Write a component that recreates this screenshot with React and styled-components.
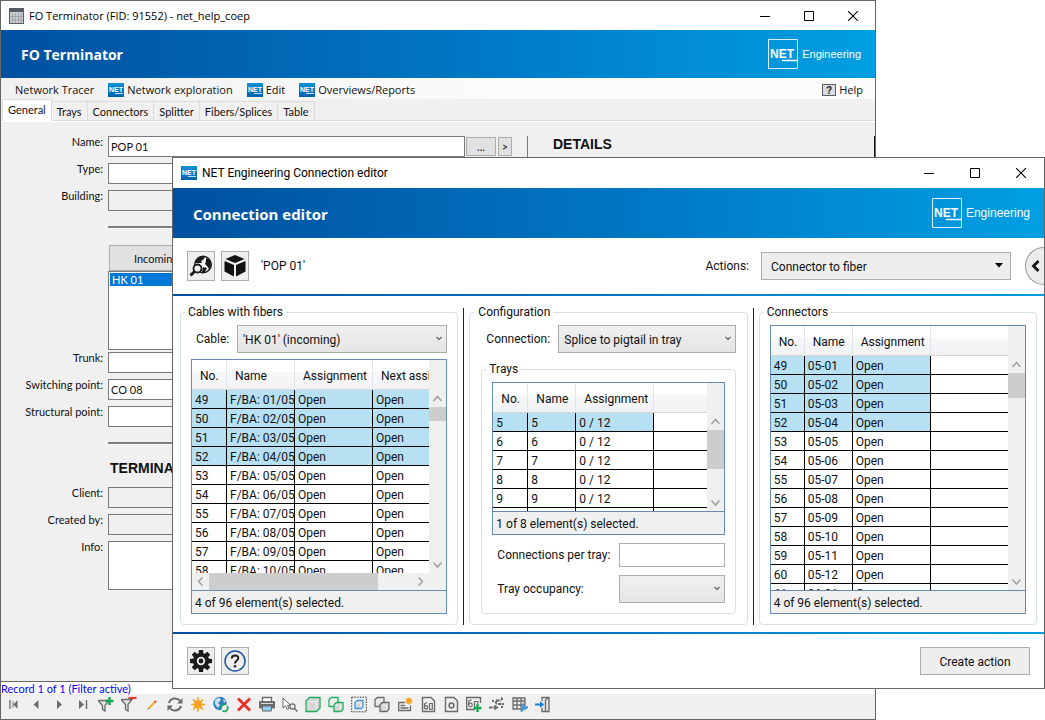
import React from 'react';
import styled, { createGlobalStyle, css } from 'styled-components';

const brand = 'linear-gradient(90deg, #0050a0 0%, #0075c2 50%, #009fe3 100%)';
const ui = 'Roboto, "Open Sans", sans-serif';
const compact = 'Lato, Roboto, sans-serif';
const heading = '"Open Sans", "Noto Sans", sans-serif';
const classic = '"Liberation Sans", Arial, sans-serif';

const GlobalStyle = createGlobalStyle`
  *, *::before, *::after { box-sizing: border-box; }
  html, body { margin: 0; background: #fff; }
  body { font: 12px/16px ${ui}; color: #111; }
  button, input, select, textarea { font: inherit; color: inherit; margin: 0; border-radius: 0; }
  svg { display: block; flex: none; }
`;

/* ---------- window frame ---------- */

const Desktop = styled.div`
  position: relative;
  display: flex;
  height: 100vh;
  min-height: 640px;
  overflow: hidden;
`;

const Window = styled.section`
  display: flex;
  flex-direction: column;
  min-width: 0;
  border: 1px solid #666;
  background: ${(p) => (p.$face ? '#f0f0f0' : '#fff')};
`;

const MainWindow = styled(Window)`
  flex: 1;
  margin-right: 169px;
  font-family: ${heading};
  font-size: 11px;
`;

const DialogWindow = styled(Window)`
  position: absolute;
  inset: 157px 0 31px 172px;
`;

const TitleBar = styled.header`
  display: flex;
  align-items: center;
  gap: 5px;
  height: ${(p) => p.$height}px;
  flex: none;
  padding-left: 8px;
  background: #fff;
  color: #000;
`;

const TitleText = styled.span`
  flex: 1;
`;

const WindowButtons = styled.div`
  display: flex;
  height: 100%;
`;

const WindowButton = styled.button`
  display: grid;
  place-items: center;
  width: ${(p) => p.$width}px;
  padding: 0;
  border: 0;
  background: none;
`;

const Banner = styled.div`
  display: flex;
  align-items: center;
  justify-content: space-between;
  flex: none;
  height: ${(p) => p.$height}px;
  padding: 0 14px 0 20px;
  background: ${brand};
  color: #fff;
`;

const BannerTitle = styled.h1`
  margin: 0;
  padding-top: 2px;
  font-family: ${heading};
  font-size: ${(p) => p.$size}px;
  line-height: 20px;
  font-weight: 700;
`;

const Brand = styled.div`
  display: flex;
  align-items: center;
  gap: 4px;
  font: ${(p) => p.$size}px/16px ${classic};
`;

function Controls({ width }) {
  return (
    <WindowButtons>
      <WindowButton $width={width} aria-label="Minimize">
        <svg width="10" height="10"><path d="M0 5.5H10" stroke="#000" /></svg>
      </WindowButton>
      <WindowButton $width={width} aria-label="Maximize">
        <svg width="10" height="10"><path d="M.5 .5H9.500V9.500H.5Z" fill="none" stroke="#000" /></svg>
      </WindowButton>
      <WindowButton $width={width} aria-label="Close">
        <svg width="10" height="10"><path d="M0 0L10 10M10 0L0 10" stroke="#000" strokeWidth="1.1" /></svg>
      </WindowButton>
    </WindowButtons>
  );
}

function BrandLogo({ size }) {
  return (
    <Brand $size={size}>
      <svg width="30" height="30" viewBox="0 0 30 30">
        <path d="M.5 .5H29.500V29.500H.5Z" fill="none" stroke="#fff" strokeOpacity=".85" />
        <text x="2" y="19" fontFamily="Liberation Sans" fontWeight="700" fontSize="12" fill="#fff">NET</text>
        <path d="M14 21.500H29" stroke="#fff" strokeWidth="1.500" />
      </svg>
      <span>Engineering</span>
    </Brand>
  );
}

function NetIcon() {
  return (
    <svg width="16" height="14" viewBox="0 0 16 14">
      <defs>
        <linearGradient id="net" x1="0" y1="0" x2="0" y2="1">
          <stop offset="0" stopColor="#0a93d8" />
          <stop offset="1" stopColor="#0062b0" />
        </linearGradient>
      </defs>
      <rect width="16" height="14" fill="url(#net)" />
      <text x="1" y="9" fontFamily="Liberation Sans" fontWeight="700" fontSize="7" fill="#fff">NET</text>
      <path d="M7 10.500H15" stroke="#bfe0f5" strokeWidth="1" />
    </svg>
  );
}

/* ---------- main window: menu and tabs ---------- */

const MenuBar = styled.nav`
  display: flex;
  align-items: center;
  gap: 14px;
  height: 21px;
  flex: none;
  padding: 2px 12px 0 14px;
  background: linear-gradient(90deg, #f0f0f0, #fcfcfc 60%);
`;

const MenuItem = styled.button`
  display: flex;
  align-items: center;
  gap: 3px;
  padding: 0;
  border: 0;
  background: none;
  ${(p) => p.$end && css`margin-left: auto;`}
`;

const Tabs = styled.div`
  display: flex;
  align-items: flex-end;
  flex: none;
  height: 22px;
  padding-left: 1px;
  border-bottom: 1px solid #dcdcdc;
  box-shadow: 0 1px #fff;
  font-family: ${compact};
`;

const Tab = styled.button`
  height: ${(p) => (p.$active ? 22 : 19)}px;
  margin-bottom: ${(p) => (p.$active ? -1 : 0)}px;
  padding: 1px 5px ${(p) => (p.$active ? 3 : 0)}px;
  border: 1px solid #dcdcdc;
  border-width: 1px 1px 0 ${(p) => (p.$active ? 1 : 0)}px;
  background: ${(p) => (p.$active ? '#fff' : '#f0f0f0')};
`;

/* ---------- main window: form ---------- */

const FormArea = styled.main`
  display: flex;
  flex: 1;
  min-height: 0;
  padding-top: 15px;
  border-bottom: 1px solid #666;
  font-family: ${compact};
  line-height: 13px;
  overflow: hidden;
`;

const Form = styled.form`
  display: grid;
  grid-template-columns: 102px 357px;
  align-content: start;
  column-gap: 5px;
  row-gap: 6px;
`;

const FieldLabel = styled.label`
  line-height: 11px;
  text-align: right;
`;

const fieldStyle = css`
  display: block;
  width: 100%;
  border: 1px solid #7a7a7a;
  background: ${(p) => (p.readOnly ? '#f0f0f0' : '#fff')};
  padding: 0 2px;
  outline: 0;
`;

const Field = styled.input`
  ${fieldStyle}
  height: 21px;
`;

const Area = styled.textarea`
  ${fieldStyle}
  height: 49px;
  resize: none;
`;

const FormRule = styled.hr`
  grid-column: 2;
  width: 100%;
  height: 3px;
  margin: 9px 0;
  border: 0;
  border-top: 2px solid #808080;
  border-bottom: 1px solid #fff;
`;

const CableBox = styled.div`
  grid-column: 2;
  margin-bottom: -4px;
  padding-top: 1px;
`;

const CableTab = styled.button`
  width: 94px;
  height: 26px;
  margin-left: 1px;
  padding: 0;
  border: 1px solid #adadad;
  background: #e1e1e1;
`;

const CableList = styled.ul`
  height: 79px;
  margin: 0;
  padding: 1px;
  border: 1px solid #7a7a7a;
  background: #fff;
  list-style: none;
`;

const CableItem = styled.li`
  padding-left: 2px;
  background: #0078d7;
  color: #fff;
`;

const SectionTitle = styled.h2`
  grid-column: 2;
  margin: 0 0 5px;
  padding-left: 2px;
  font: 700 14px/16px ${classic};
`;

const SideButtons = styled.div`
  display: flex;
  gap: 2px;
  height: 19px;
  margin: 1px 15px 0 1px;
`;

const SideButton = styled.button`
  width: ${(p) => p.$width}px;
  padding: 0;
  border: 1px solid #adadad;
  background: #e1e1e1;
`;

const Details = styled.aside`
  flex: 1;
  padding-left: 23px;
  border-left: 1px solid #7a7a7a;
  border-right: 1px solid #111;
`;

function TextRow({ id, label, ...rest }) {
  return (
    <>
      <FieldLabel htmlFor={id}>{label}</FieldLabel>
      <Field id={id} {...rest} />
    </>
  );
}

/* ---------- main window: status and record toolbar ---------- */

const RecordStatus = styled.div`
  flex: none;
  height: 12px;
  background: #fff;
  color: #00f;
  font-family: ${compact};
  line-height: 14px;
`;

const RecordBar = styled.div`
  display: flex;
  align-items: center;
  flex: none;
  gap: 5px;
  height: 25px;
  padding: 0 4px 4px;
`;

const RecordButton = styled.button`
  display: grid;
  place-items: center;
  width: 18px;
  height: 18px;
  padding: 0;
  border: 0;
  background: none;
`;

const g = '#6b6b6b';
const cube = (x, y, s, stroke, fill = '#d6d6d6') => (
  <g transform={`translate(${x} ${y})`}>
    <path d={`M0 ${s * 0.25}L${s * 0.25} 0H${s}V${s * 0.75}L${s * 0.75} ${s}H0Z`} fill={fill} stroke={stroke} strokeWidth="1.300" strokeLinejoin="round" />
    <path d={`M${s * 0.2} ${s * 0.3}H${s * 0.72}V${s * 0.85}M${s * 0.72} ${s * 0.3}L${s * 0.9} ${s * 0.12}`} fill="none" stroke="#f2f2f2" strokeWidth="1" />
  </g>
);
const page = <path d="M2.500 1.500H11L14.500 5V15.500H2.500Z" fill="none" stroke={g} strokeWidth="1.400" />;

const recordIcons = [
  ['First record', <><path d="M4 4V13" stroke={g} strokeWidth="1.300" /><path d="M11.500 4V13L7.500 8.500Z" fill={g} /><path d="M7 5.500V11.500" stroke={g} strokeWidth="1" /></>],
  ['Previous record', <path d="M9.500 4V13L4.500 8.500Z" fill={g} />],
  ['Next record', <path d="M5 4V13L10 8.500Z" fill={g} />],
  ['Last record', <><path d="M4 4V13L9 8.500Z" fill={g} /><path d="M11.500 4V13" stroke={g} strokeWidth="1.400" /></>],
  ['Add filter', <><path d="M0 4.500H11L7 9.500V15L4.500 13.500V9.500Z" fill="#e4e4e4" stroke={g} strokeWidth="1.300" /><path d="M11.500 1V9M7.500 5H15.500" stroke="#14a850" strokeWidth="2.400" /></>],
  ['Remove filter', <><path d="M0 3.500H11L7 8.500V15L4.500 13.500V8.500Z" fill="#e4e4e4" stroke={g} strokeWidth="1.300" /><path d="M7.500 2H15.500" stroke="#e8342e" strokeWidth="2.200" /></>],
  ['Edit', <><path d="M4.500 12.500L10.500 6.500" stroke="#f6b73c" strokeWidth="2.400" /><path d="M10.500 6.500L12 5" stroke="#e0564a" strokeWidth="2.400" /><path d="M3.500 13.500L5 12" stroke={g} /></>],
  ['Refresh', <><path d="M2 7A6.200 6.200 0 0 1 13 5M14 10A6.200 6.200 0 0 1 3 12" fill="none" stroke={g} strokeWidth="2" /><path d="M15.500 2V7.500H10ZM.5 15V9.500H6Z" fill={g} /></>],
  ['New', <><path d="M8 1.500V15.500M1 8.500H15M3 3.500L13 13.500M13 3.500L3 13.500" stroke="#f9a11b" strokeWidth="1.700" /><circle cx="8" cy="8.500" r="4" fill="#f9a11b" /></>],
  ['Update map', <><circle cx="7" cy="7.500" r="6.700" fill="#2f7fc0" /><path d="M2 4L6 1.500L8 4L5 7L7 9L5 12L2 8ZM10 3L13 5L11 7Z" fill="#cfe4f2" /><circle cx="11.500" cy="12" r="3.300" fill="#f0f0f0" stroke="#1fae5b" strokeWidth="1.700" strokeDasharray="7 2" /></>],
  ['Delete', <path d="M2 2.500L14 14.500M14 2.500L2 14.500" stroke="#e8342e" strokeWidth="3" />],
  ['Print', <><path d="M3.500 5V1.500H12.500V5" fill="#fff" stroke={g} strokeWidth="1.300" /><rect x="0" y="5" width="16" height="7.500" rx="1" fill={g} /><path d="M2 7.500H14" stroke="#ddd" /><path d="M3.500 10H12.500V15H3.500Z" fill="#8ccdf5" stroke={g} /></>],
  ['Find selection', <><path d="M1 2V12L3.500 9.800L5.500 13.500L7 12.500L5.500 9.200H8.500Z" fill="#fff" stroke={g} /><circle cx="10.500" cy="10.500" r="2.600" fill="#eee" stroke={g} strokeWidth="1.200" /><path d="M12.500 12.500L15.500 15.500" stroke={g} strokeWidth="1.500" /></>],
  ['Object', cube(1, 1.500, 14, '#22ad5e')],
  ['Objects', <>{cube(1, 1.500, 9, '#22ad5e', '#f0f0f0')}{cube(6, 6.500, 9, '#22ad5e')}</>],
  ['Select object', <><rect x=".7" y="1.200" width="14.600" height="14.600" fill="none" stroke="#333" strokeDasharray="1.500 1.200" />{cube(4, 4.500, 8, '#3d9be0')}</>],
  ['Copy object', <>{cube(1, 1.500, 9, g, '#e6e6e6')}{cube(6, 6.500, 9, g)}</>],
  ['New entry', <><path d="M8 6.500H1.700V14.500H13.500V9.500" fill="#eee" stroke={g} strokeWidth="1.300" /><path d="M3.500 9.500H8M3.500 12H11.500" stroke={g} strokeWidth="1.300" /><path d="M12 1.500V8.500M8.500 5H15.500M9.500 2.500L14.500 7.500M14.500 2.500L9.500 7.500" stroke="#f9a11b" strokeWidth="1.600" /></>],
  ['Report', <>{page}<circle cx="6" cy="11.300" r="1.700" fill="none" stroke={g} strokeWidth="1.300" /><path d="M4.500 11V8L7 6.500M9.500 13.500V7.500H12.300V13.500Z" fill="none" stroke={g} strokeWidth="1.200" /></>],
  ['Page', <>{page}<circle cx="8.500" cy="9.500" r="2.400" fill="none" stroke={g} strokeWidth="1.500" /></>],
  ['Add report', <><path d="M14.500 7V1.500H.7V13.500H9" fill="none" stroke={g} strokeWidth="1.400" /><circle cx="4.500" cy="9" r="1.800" fill="none" stroke={g} strokeWidth="1.200" /><path d="M2.800 9V5L5.500 3.500M8.500 11.500V5.500H11.800V8" fill="none" stroke={g} strokeWidth="1.200" /><path d="M11.500 8V16M7.500 12H15.500" stroke="#14a850" strokeWidth="2.300" /></>],
  ['Trace', <><path d="M0 11.500H7M7 4.500H12M9 8H15" stroke={g} strokeWidth="1.800" strokeDasharray="3.500 .8" /><path d="M5.500 8.500L9.500 11.500L5.500 14.500ZM3 4H5V6H3ZM12 1L14 2V4H12ZM12 10H14V12H12ZM8 3L5.500 6.500L8 9Z" fill={g} /></>],
  ['Table settings', <><path d="M1 2H13V13H1ZM1 5H13M1 9H13M5 2V13M9 2V13" fill="#eee" stroke={g} strokeWidth="1.300" /><path d="M9 15.500L13 10.500" stroke="#3d9be0" strokeWidth="2.300" /><path d="M12 7.500A2.600 2.600 0 1 0 15.500 10" fill="none" stroke="#3d9be0" strokeWidth="1.700" /></>],
  ['Close form', <><path d="M7 5V1.500H14V15.500H7V12M10.500 4L14 1.500M10.500 4V15.500" fill="#e4e4e4" stroke={g} strokeWidth="1.300" /><path d="M0 8.500H7" stroke="#1685d8" strokeWidth="2" /><path d="M5 5L9 8.500L5 12Z" fill="#1685d8" /></>],
];

/* ---------- dialog ---------- */

const DialogTools = styled.div`
  display: flex;
  align-items: center;
  flex: none;
  gap: 6px;
  height: 56px;
  padding-left: 14px;
`;

const IconButton = styled.button`
  display: grid;
  place-items: center;
  width: 28px;
  height: ${(p) => p.$height}px;
  padding: 0;
  border: 1px solid #adadad;
  background: #eee;
`;

const ObjectName = styled.span`
  flex: 1;
  padding-left: 6px;
`;

const ActionsLabel = styled.label`
  margin-right: 6px;
`;

const Drawer = styled.button`
  display: grid;
  place-items: center;
  width: 19px;
  height: 38px;
  margin-left: 8px;
  padding: 0;
  border: 1px solid #999;
  border-right: 0;
  border-radius: 19px 0 0 19px;
  background: #ececec;
`;

const BrandRule = styled.div`
  height: 2px;
  flex: none;
  background: ${brand};
`;

const SelectBox = styled.div`
  position: relative;
  display: flex;
  flex: ${(p) => (p.$width ? `0 1 ${p.$width}px` : 1)};
  height: 28px;
  min-width: 0;

  svg {
    position: absolute;
    right: ${(p) => (p.$solid ? 8 : 4)}px;
    top: ${(p) => (p.$solid ? 11 : 10)}px;
    pointer-events: none;
  }
`;

const NativeSelect = styled.select`
  appearance: none;
  width: 100%;
  padding: 1px ${(p) => (p.$solid ? 9 : 5)}px 0;
  border: 1px solid #acacac;
  background: ${(p) => (p.$solid ? '#eee' : 'linear-gradient(#f0f0f0, #e5e5e5)')};
`;

function Select({ id, value, width, solid }) {
  return (
    <SelectBox $width={width} $solid={solid}>
      <NativeSelect id={id} $solid={solid} defaultValue={value}>
        <option>{value}</option>
      </NativeSelect>
      {solid ? (
        <svg width="8" height="5"><path d="M0 0H8L4 4.500Z" fill="#000" /></svg>
      ) : (
        <svg width="8" height="7"><path d="M1.500 2L4 4.500L6.500 2" fill="none" stroke="#606060" strokeWidth="1.200" /></svg>
      )}
    </SelectBox>
  );
}

const Columns = styled.main`
  display: grid;
  grid-template-columns: minmax(0, 1fr) 1px minmax(0, 1fr) 1px minmax(0, 1fr);
  grid-template-rows: minmax(0, 1fr);
  column-gap: 5px;
  flex: 1;
  min-height: 0;
  padding: 8px 7px 7px;
`;

const Divider = styled.div`
  margin-top: 4px;
  background: #222;
`;

const Group = styled.fieldset`
  display: flex;
  flex-direction: column;
  gap: ${(p) => p.$gap || 6}px;
  min-width: 0;
  min-height: 0;
  margin: 0;
  padding: 5px ${(p) => p.$side || 10}px 10px;
  border: 1px solid #d5dfe5;
  border-radius: 4px;
  ${(p) => p.$inner && css`flex: 1;`}
`;

const Legend = styled.legend`
  margin-left: -6px;
  padding: 0 3px;
`;

const ControlRow = styled.div`
  display: grid;
  grid-template-columns: ${(p) => p.$label}px minmax(0, 1fr);
  align-items: center;
  flex: none;

  label {
    padding: 0 0 0 5px;
    white-space: nowrap;
  }
`;

const PlainInput = styled.input`
  width: 100%;
  height: 24px;
  padding: 0 4px;
  border: 1px solid #ababab;
  background: #fff;
`;

const GridFrame = styled.div`
  display: flex;
  flex-direction: column;
  flex: 1;
  min-height: 0;
  border: 1px solid #688caf;
`;

const GridBody = styled.div`
  display: flex;
  flex: 1;
  min-height: 0;
`;

const GridMain = styled.div`
  display: flex;
  flex-direction: column;
  flex: 1;
  min-width: 0;
`;

const GridViewport = styled.div`
  flex: 1;
  min-height: 0;
  overflow: hidden;
`;

const GridTable = styled.table`
  width: ${(p) => (p.$width ? `${p.$width}px` : '100%')};
  table-layout: fixed;
  border-collapse: separate;
  border-spacing: 0;
`;

const HeadCell = styled.th`
  height: 30px;
  padding: 3px 0 0 8px;
  border-right: 1px solid #e3e5e8;
  border-bottom: 1px solid #d5d5d5;
  background: linear-gradient(#fff 0 42%, #f7f8fa 42%, #f1f2f4);
  font-weight: 400;
  text-align: left;
  white-space: nowrap;
  &:last-child { border-right: 0; }
`;

const Cell = styled.td`
  height: 19px;
  padding: 2px 0 0 3px;
  border-right: 1px solid #000;
  border-bottom: 1px solid #000;
  background: ${(p) => (p.$selected ? '#b8e0f3' : '#fff')};
  line-height: 16px;
  white-space: nowrap;
  &:last-child { border-right: 0; }
`;

const GridStatus = styled.div`
  flex: none;
  height: 23px;
  padding: 4px 3px 0;
  border-top: 1px solid #688caf;
  background: #f0f0f0;
`;

const VScroll = styled.div`
  display: flex;
  flex-direction: column;
  align-items: center;
  flex: none;
  width: 17px;
  padding: 30px 0 ${(p) => (p.$corner ? 17 : 0)}px;
  background: #f0f0f0;
`;

const HScroll = styled.div`
  display: flex;
  align-items: center;
  flex: none;
  height: 17px;
  background: #f0f0f0;
`;

const VThumb = styled.div`
  width: 17px;
  height: ${(p) => p.$size}px;
  margin-bottom: auto;
  background: #cdcdcd;
`;

const HThumb = styled.div`
  width: 71%;
  height: 17px;
  margin-right: auto;
  background: #cdcdcd;
`;

const arrowPaths = {
  up: 'M4.500 11L8.500 6.500L12.500 11',
  down: 'M4.500 6.500L8.500 11L12.500 6.500',
  left: 'M10.500 4.500L6.500 8.500L10.500 12.500',
  right: 'M6.500 4.500L10.500 8.500L6.500 12.500',
};

function Arrow({ dir }) {
  return (
    <svg width="17" height="17">
      <path d={arrowPaths[dir]} fill="none" stroke="#a0a0a0" strokeWidth="1.500" />
    </svg>
  );
}

function DataGrid({ columns, rows, selected, status, thumb, tableWidth, horizontal }) {
  return (
    <GridFrame>
      <GridBody>
        <GridMain>
          <GridViewport>
            <GridTable $width={tableWidth}>
              <colgroup>
                {columns.map(([label, width]) => <col key={label} width={width} />)}
              </colgroup>
              <thead>
                <tr>{columns.map(([label]) => <HeadCell key={label} scope="col">{label}</HeadCell>)}</tr>
              </thead>
              <tbody>
                {rows.map((row, r) => (
                  <tr key={r}>
                    {columns.map(([label], c) => (
                      <Cell key={label} $selected={r < selected && label !== ''}>{row[c]}</Cell>
                    ))}
                  </tr>
                ))}
              </tbody>
            </GridTable>
          </GridViewport>
          {horizontal && <HScroll><Arrow dir="left" /><HThumb /><Arrow dir="right" /></HScroll>}
        </GridMain>
        <VScroll $corner={horizontal}>
          <Arrow dir="up" /><VThumb $size={thumb} /><Arrow dir="down" />
        </VScroll>
      </GridBody>
      <GridStatus>{status}</GridStatus>
    </GridFrame>
  );
}

const DialogFooter = styled.footer`
  display: flex;
  flex: none;
  gap: 6px;
  height: 54px;
  padding: 13px 14px;
`;

const PushButton = styled.button`
  width: 110px;
  height: 28px;
  margin-left: auto;
  padding: 2px 0 0;
  border: 1px solid #adadad;
  background: #eee;
`;

const pad = (n) => String(n).padStart(2, '0');
const fibers = Array.from({ length: 10 }, (_, i) => [49 + i, `F/BA: ${pad(i + 1)}/05`, 'Open', 'Open']);
const trays = [...[5, 6, 7, 8, 9].map((n) => [n, n, '0 / 12', '']), ['', '', '', '']];
const connectors = Array.from({ length: 13 }, (_, i) => [
  49 + i, i < 12 ? `05-${pad(i + 1)}` : '06-01', 'Open', '',
]);

const teeth = [0, 45, 90, 135, 180, 225, 270, 315];

export default function App() {
  return (
    <Desktop>
      <GlobalStyle />
      <MainWindow $face>
        <TitleBar $height={29}>
          <svg width="15" height="16" viewBox="0 0 15 16">
            <rect x=".5" y=".5" width="14" height="15" fill="#c9cbcf" stroke="#5a5d63" />
            <path d="M1 2.500H14" stroke="#555a63" strokeWidth="3" />
            <path d="M3.500 5V15M6.500 5V15M9.500 5V15M12 5V15M1 8.500H14M1 12H14" stroke="#9a9ca1" strokeWidth=".8" />
          </svg>
          <TitleText>FO Terminator (FID: 91552) - net_help_coep</TitleText>
          <Controls width={44} />
        </TitleBar>
        <Banner $height={48}>
          <BannerTitle $size={14}>FO Terminator</BannerTitle>
          <BrandLogo size={11} />
        </Banner>
        <MenuBar>
          <MenuItem>Network Tracer</MenuItem>
          <MenuItem><NetIcon />Network exploration</MenuItem>
          <MenuItem><NetIcon />Edit</MenuItem>
          <MenuItem><NetIcon />Overviews/Reports</MenuItem>
          <MenuItem $end>
            <svg width="14" height="12" viewBox="0 0 14 12">
              <rect x=".5" y=".5" width="13" height="11" fill="#d9dce2" stroke="#5c5f66" />
              <text x="4" y="10" fontFamily="Liberation Sans" fontWeight="700" fontSize="10" fill="#222">?</text>
            </svg>
            Help
          </MenuItem>
        </MenuBar>
        <Tabs role="tablist">
          {['General', 'Trays', 'Connectors', 'Splitter', 'Fibers/Splices', 'Table'].map((name, i) => (
            <Tab key={name} role="tab" aria-selected={i === 0} $active={i === 0}>{name}</Tab>
          ))}
        </Tabs>
        <FormArea>
          <Form>
            <TextRow id="name" label="Name:" defaultValue="POP 01" />
            <TextRow id="type" label="Type:" />
            <TextRow id="building" label="Building:" readOnly />
            <FormRule />
            <CableBox>
              <CableTab type="button">Incoming</CableTab>
              <CableList><CableItem>HK 01</CableItem></CableList>
            </CableBox>
            <TextRow id="trunk" label="Trunk:" />
            <TextRow id="switching" label="Switching point:" defaultValue="CO 08" />
            <TextRow id="structural" label="Structural point:" />
            <FormRule />
            <SectionTitle>TERMINATOR</SectionTitle>
            <TextRow id="client" label="Client:" readOnly />
            <TextRow id="created" label="Created by:" readOnly />
            <FieldLabel htmlFor="info">Info:</FieldLabel>
            <Area id="info" />
          </Form>
          <SideButtons>
            <SideButton $width={30} aria-label="Browse">...</SideButton>
            <SideButton $width={14} aria-label="Go to">&gt;</SideButton>
          </SideButtons>
          <Details>
            <SectionTitle>DETAILS</SectionTitle>
          </Details>
        </FormArea>
        <RecordStatus>Record 1 of 1 (Filter active)</RecordStatus>
        <RecordBar role="toolbar">
          {recordIcons.map(([name, drawing]) => (
            <RecordButton key={name} aria-label={name}>
              <svg width="16" height="17" viewBox="0 0 16 17">{drawing}</svg>
            </RecordButton>
          ))}
        </RecordBar>
      </MainWindow>

      <DialogWindow>
        <TitleBar $height={30}>
          <NetIcon />
          <TitleText>NET Engineering Connection editor</TitleText>
          <Controls width={46} />
        </TitleBar>
        <Banner $height={50}>
          <BannerTitle $size={15}>Connection editor</BannerTitle>
          <BrandLogo size={12} />
        </Banner>
        <DialogTools>
          <IconButton $height={30} aria-label="Locate on map">
            <svg width="24" height="24" viewBox="0 0 24 24">
              <circle cx="14" cy="10.500" r="8.200" fill="#fff" stroke="#1a1a1a" strokeWidth="1.500" />
              <path d="M8 5L12 2.500L16 3L14 6L12 7L13 9L9 9L6 9ZM17 4L21 6L22.500 11L20 15L18 12L16 10L17 7ZM14 13L18 14L16 18H13Z" fill="#1a1a1a" />
              <circle cx="8.500" cy="14.500" r="4" fill="#eee" stroke="#1a1a1a" strokeWidth="1.800" />
              <path d="M5.500 17.500L1.500 21.500" stroke="#1a1a1a" strokeWidth="3" />
            </svg>
          </IconButton>
          <IconButton $height={30} aria-label="Object">
            <svg width="22" height="24" viewBox="0 0 22 24">
              <path d="M11 1L20.500 5L11 9L1.500 5Z M.5 7L10 11V22.500L.5 17.500Z M21.500 7L12 11V22.500L21.500 17.500Z" fill="#111" />
            </svg>
          </IconButton>
          <ObjectName>'POP 01'</ObjectName>
          <ActionsLabel htmlFor="actions">Actions:</ActionsLabel>
          <Select id="actions" value="Connector to fiber" width={250} solid />
          <Drawer aria-label="Open side panel">
            <svg width="9" height="12" viewBox="0 0 9 12"><path d="M7.500 1L2.500 6L7.500 11" fill="none" stroke="#111" strokeWidth="2.800" /></svg>
          </Drawer>
        </DialogTools>
        <BrandRule />
        <Columns>
          <Group>
            <Legend>Cables with fibers</Legend>
            <ControlRow $label={46}>
              <label htmlFor="cable">Cable:</label>
              <Select id="cable" value="'HK 01' (incoming)" />
            </ControlRow>
            <DataGrid
              columns={[['No.', 35], ['Name', 68], ['Assignment', 78], ['Next assignment', 110]]}
              tableWidth={291}
              rows={fibers}
              selected={4}
              status="4 of 96 element(s) selected."
              thumb={14}
              horizontal
            />
          </Group>
          <Divider />
          <Group $gap={8} $side={11}>
            <Legend>Configuration</Legend>
            <ControlRow $label={77}>
              <label htmlFor="connection">Connection:</label>
              <Select id="connection" value="Splice to pigtail in tray" />
            </ControlRow>
            <Group $inner $gap={8}>
              <Legend>Trays</Legend>
              <DataGrid
                columns={[['No.', 35], ['Name', 48], ['Assignment', 78], ['', undefined]]}
                rows={trays}
                selected={1}
                status="1 of 8 element(s) selected."
                thumb={39}
              />
              <ControlRow $label={127}>
                <label htmlFor="per-tray">Connections per tray:</label>
                <PlainInput id="per-tray" />
              </ControlRow>
              <ControlRow $label={127}>
                <label htmlFor="occupancy">Tray occupancy:</label>
                <Select id="occupancy" value="" />
              </ControlRow>
            </Group>
          </Group>
          <Divider />
          <Group>
            <Legend>Connectors</Legend>
            <DataGrid
              columns={[['No.', 34], ['Name', 48], ['Assignment', 78], ['', undefined]]}
              rows={connectors}
              selected={4}
              status="4 of 96 element(s) selected."
              thumb={25}
            />
          </Group>
        </Columns>
        <BrandRule />
        <DialogFooter>
          <IconButton $height={28} aria-label="Settings">
            <svg width="22" height="22" viewBox="0 0 22 22">
              <circle cx="11" cy="11" r="8" fill="#1a1a1a" />
              {teeth.map((a) => (
                <path key={a} d="M8.500 4L9 0H13L13.500 4Z" fill="#1a1a1a" transform={`rotate(${a} 11 11)`} />
              ))}
              <circle cx="11" cy="11" r="3.300" fill="none" stroke="#eee" strokeWidth="1.800" />
            </svg>
          </IconButton>
          <IconButton $height={28} aria-label="Help">
            <svg width="22" height="22" viewBox="0 0 22 22">
              <circle cx="11" cy="11" r="10" fill="#eee" stroke="#1d57a5" strokeWidth="1.500" />
              <path d="M7.800 8.500C7.800 4.300 14.500 4.500 14.300 8.200C14.200 10.500 11 10.500 11 13.500" fill="none" stroke="#222" strokeWidth="2" />
              <circle cx="11" cy="16.300" r="1.300" fill="#222" />
            </svg>
          </IconButton>
          <PushButton>Create action</PushButton>
        </DialogFooter>
      </DialogWindow>
    </Desktop>
  );
}
